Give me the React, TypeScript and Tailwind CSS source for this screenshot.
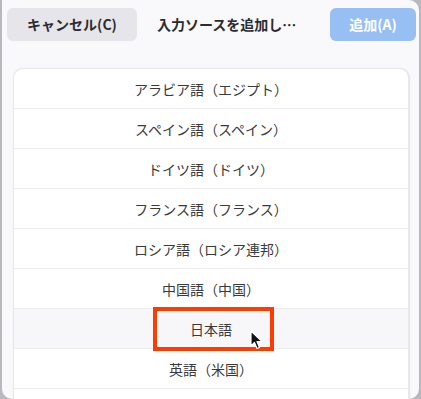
import React from 'react';

const rows = [
  'アラビア語（エジプト）',
  'スペイン語（スペイン）',
  'ドイツ語（ドイツ）',
  'フランス語（フランス）',
  'ロシア語（ロシア連邦）',
  '中国語（中国）',
  '日本語',
  '英語（米国）',
];

function Cursor() {
  return (
    <svg width="16" height="22" viewBox="0 0 16 22" className="absolute left-[236px] top-[21px]">
      <path d="M1 1 L1 16 L4.5 12.5 L7 18.5 L9.5 17.5 L7 11.5 L12 11.5 Z" fill="#111" stroke="#fff" strokeWidth="1.2" strokeLinejoin="round" />
    </svg>
  );
}

export default function App() {
  return (
    <div
      className="w-[421px] h-[399px] overflow-hidden bg-[#b9b8bc]"
      style={{ fontFamily: '"Noto Sans CJK JP", "Noto Sans", sans-serif' }}
    >
      <div className="ml-[2px] mr-[2px] h-[399px] bg-[#f9f8fb] rounded-tr-[10px] rounded-bl-[10px] rounded-br-[10px] overflow-hidden flex flex-col">
        {/* Header */}
        <div className="flex items-center pt-[5px] pl-[5px] pr-[3px] h-[38px] box-content">
          <button className="w-[130px] h-[33px] rounded-[6px] bg-[#e6e5e9] text-[14px] font-bold text-[#2c2c2e]">
            キャンセル(C)
          </button>
          <div className="ml-[20px] text-[14px] font-bold text-[#2c2c2e] flex-1">入力ソースを追加し…</div>
          <button className="w-[86px] h-[33px] rounded-[6px] bg-[#98bff4] text-[14px] font-bold text-white">
            追加(A)
          </button>
        </div>

        {/* List */}
        <div className="mt-[25px] ml-[11px] w-[397px] flex-1 bg-white rounded-t-[10px] border-t border-l border-r-2 border-[#e8e7ea] shadow-[0_0_2px_rgba(0,0,0,0.06)]">
          {rows.map((r, i) => (
            <div
              key={r}
              className={`relative h-[40px] flex items-center justify-center pt-[2px] text-[14px] text-[#3a3a3c] border-b border-[#ececef] ${
                i === 6 ? 'bg-[#f7f6f9]' : ''
              }`}
            >
              {r}
              {i === 6 && (
                <>
                  <div className="absolute left-[139px] top-[-2px] w-[121px] h-[44px] border-[4px] border-[#ff3c00]" />
                  <Cursor />
                </>
              )}
            </div>
          ))}
        </div>
      </div>
    </div>
  );
}
